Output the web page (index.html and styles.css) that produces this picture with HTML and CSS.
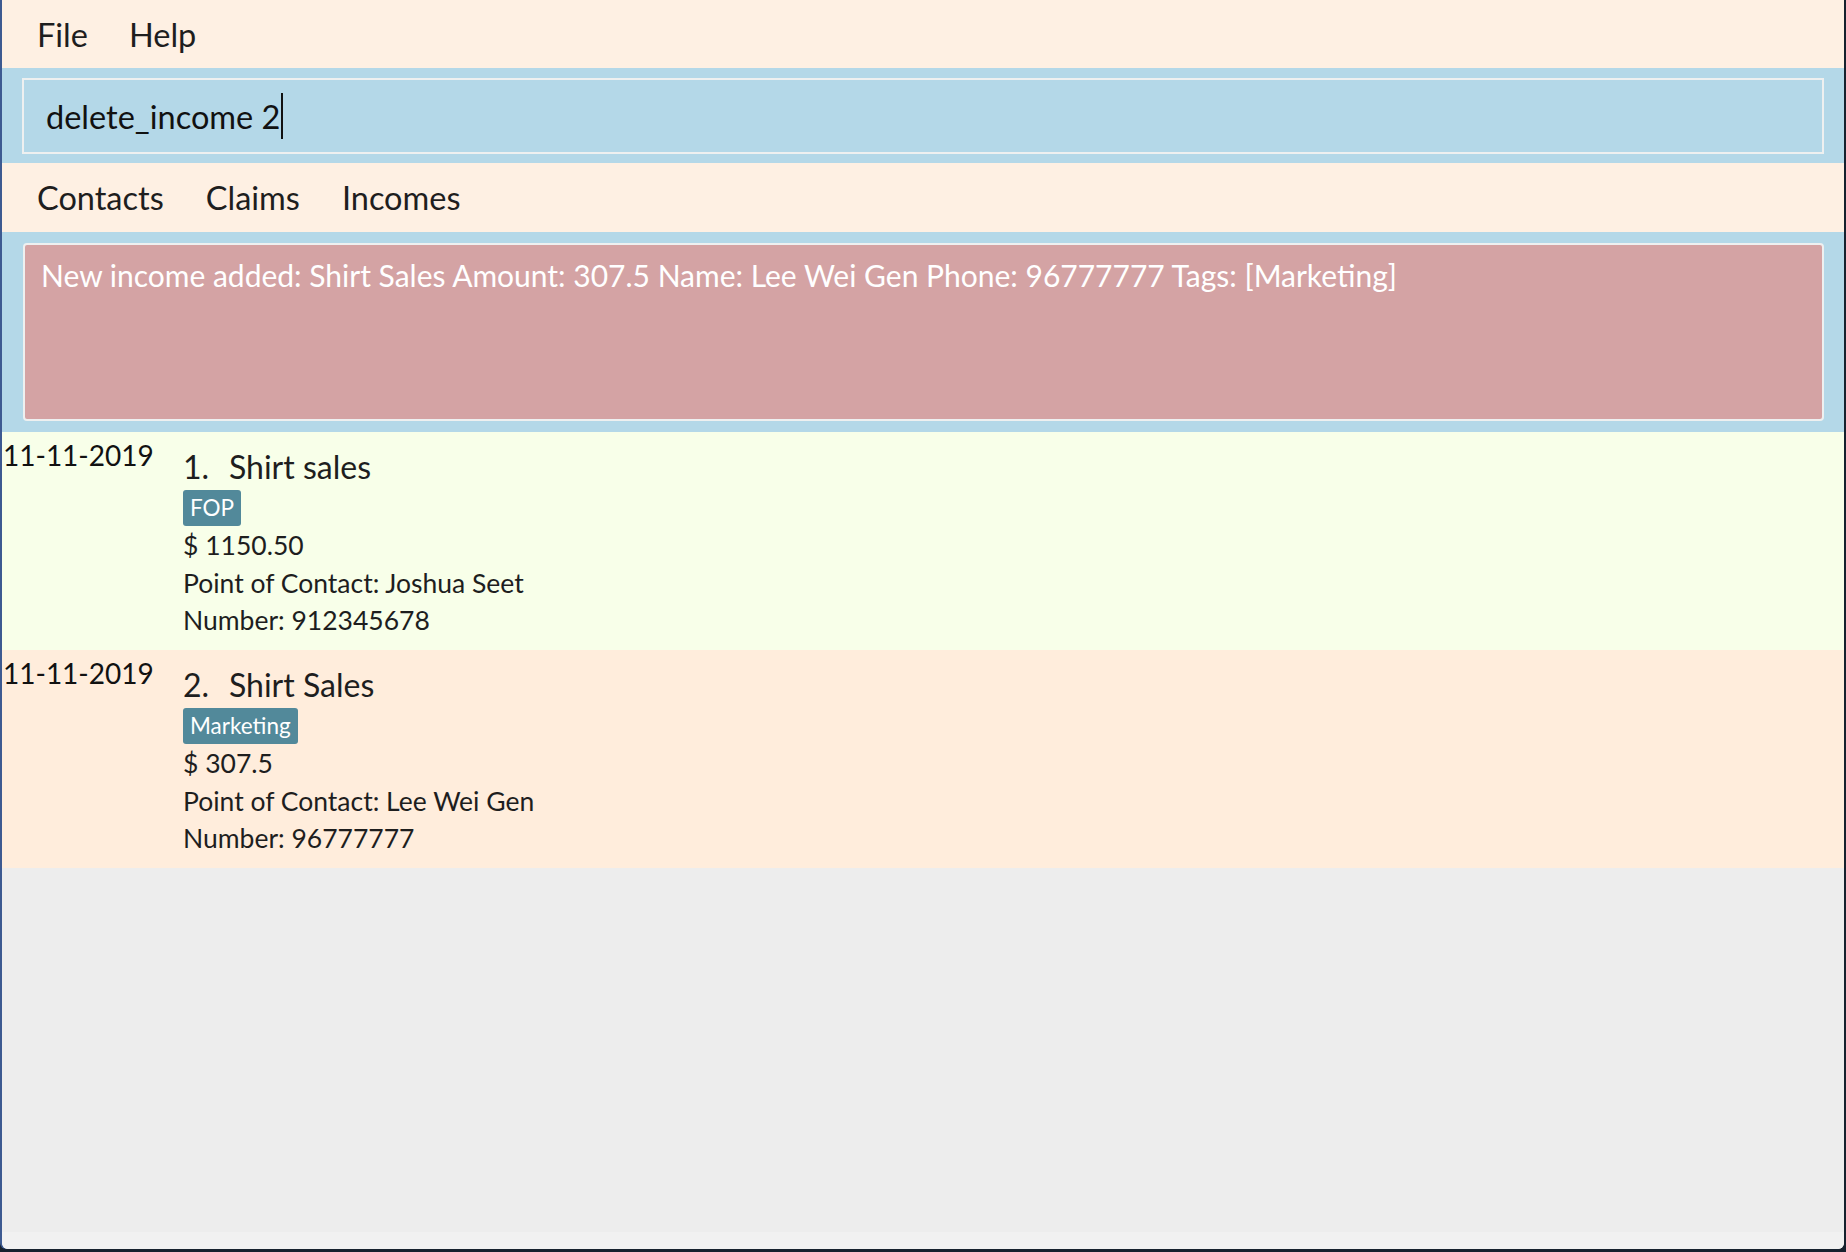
FILE: index.html
```html
<!DOCTYPE html>
<html>
<head>
<meta charset="utf-8">
<link rel="stylesheet" href="styles.css">
</head>
<body>
<div class="window">
  <div class="menubar">
    <span class="menu-item">File</span>
    <span class="menu-item">Help</span>
  </div>
  <div class="command">
    <div class="command-box"><span class="command-text">delete_income 2</span><span class="caret"></span></div>
  </div>
  <div class="tabs">
    <span class="tab">Contacts</span>
    <span class="tab">Claims</span>
    <span class="tab">Incomes</span>
  </div>
  <div class="result">
    <div class="result-box">New income added: Shirt Sales Amount: 307.5 Name: Lee Wei Gen Phone: 96777777 Tags: [Marketing]</div>
  </div>
  <div class="list">
    <div class="card card-odd">
      <div class="date">11-11-2019</div>
      <div class="details">
        <div class="title"><span class="index">1.</span><span>Shirt sales</span></div>
        <div class="tags"><span class="tag">FOP</span></div>
        <div class="line">$ 1150.50</div>
        <div class="line">Point of Contact: Joshua Seet</div>
        <div class="line">Number: 912345678</div>
      </div>
    </div>
    <div class="card card-even">
      <div class="date">11-11-2019</div>
      <div class="details">
        <div class="title"><span class="index">2.</span><span>Shirt Sales</span></div>
        <div class="tags"><span class="tag">Marketing</span></div>
        <div class="line">$ 307.5</div>
        <div class="line">Point of Contact: Lee Wei Gen</div>
        <div class="line">Number: 96777777</div>
      </div>
    </div>
    <div class="filler"></div>
    <div class="statusbar"></div>
  </div>
</div>
</body>
</html>
```
FILE: styles.css
```css
html, body {
  margin: 0;
  padding: 0;
}
body {
  width: 1846px;
  height: 1252px;
  background: #16212e;
  overflow: hidden;
  font-family: Lato, "Noto Sans", sans-serif;
  color: #1e1e1e;
}
.window {
  margin-left: 2px;
  width: 1842px;
  height: 1249px;
  display: flex;
  flex-direction: column;
  background: #ededed;
  box-shadow: -2px 0 0 #3d5a91;
  border-bottom-left-radius: 6px;
  border-bottom-right-radius: 6px;
  overflow: hidden;
}
.menubar {
  height: 68px;
  background: #fef0e3;
  display: flex;
  align-items: center;
  padding-left: 35px;
  gap: 41px;
  font-size: 32.5px;
  box-sizing: border-box;
}
.command {
  height: 95px;
  background: #b4d8e8;
  box-sizing: border-box;
  padding: 10px 20px 9px 20px;
}
.command-box {
  height: 76px;
  box-sizing: border-box;
  border: 2px solid #eef0f0;
  display: flex;
  align-items: center;
  padding-left: 22px;
  font-size: 32.5px;
  color: #111;
}
.caret {
  display: inline-block;
  width: 2px;
  height: 46px;
  background: #111;
  margin-left: 1px;
}
.tabs {
  height: 69px;
  background: #fef0e3;
  display: flex;
  align-items: center;
  padding-left: 35px;
  gap: 42px;
  font-size: 32.5px;
  box-sizing: border-box;
}
.result {
  height: 200px;
  background: #b4d8e8;
  box-sizing: border-box;
  padding: 11px 20px 11px 21px;
}
.result-box {
  height: 100%;
  box-sizing: border-box;
  border: 2px solid #eef0f0;
  border-radius: 4px;
  background: #d4a3a4;
  color: #ffffff;
  font-size: 30px;
  padding: 13px 16px;
  line-height: 34px;
}
.list {
  flex: 1;
  display: flex;
  flex-direction: column;
}
.card {
  height: 218px;
  display: flex;
  box-sizing: border-box;
}
.card-odd { background: #f8ffe9; }
.card-even { background: #ffeddc; }
.date {
  width: 181px;
  padding-left: 1px;
  box-sizing: border-box;
  font-size: 28px;
  line-height: 30px;
  padding-top: 8px;
  color: #111;
}
.details {
  padding-top: 18px;
}
.title {
  font-size: 32px;
  line-height: 34px;
  display: flex;
}
.index {
  width: 46px;
}
.tags {
  margin-top: 6px;
  display: flex;
}
.tag {
  background: #52899a;
  color: #fff;
  font-size: 22.5px;
  line-height: 36px;
  height: 36px;
  padding: 0 7px;
  border-radius: 3px;
}
.line {
  font-size: 26.5px;
  line-height: 37.5px;
}
.tags + .line {
  margin-top: 1px;
}
.filler {
  flex: 1;
  background: #ededed;
}
.statusbar {
  height: 17px;
  background: #f1f1f1;
}
```
